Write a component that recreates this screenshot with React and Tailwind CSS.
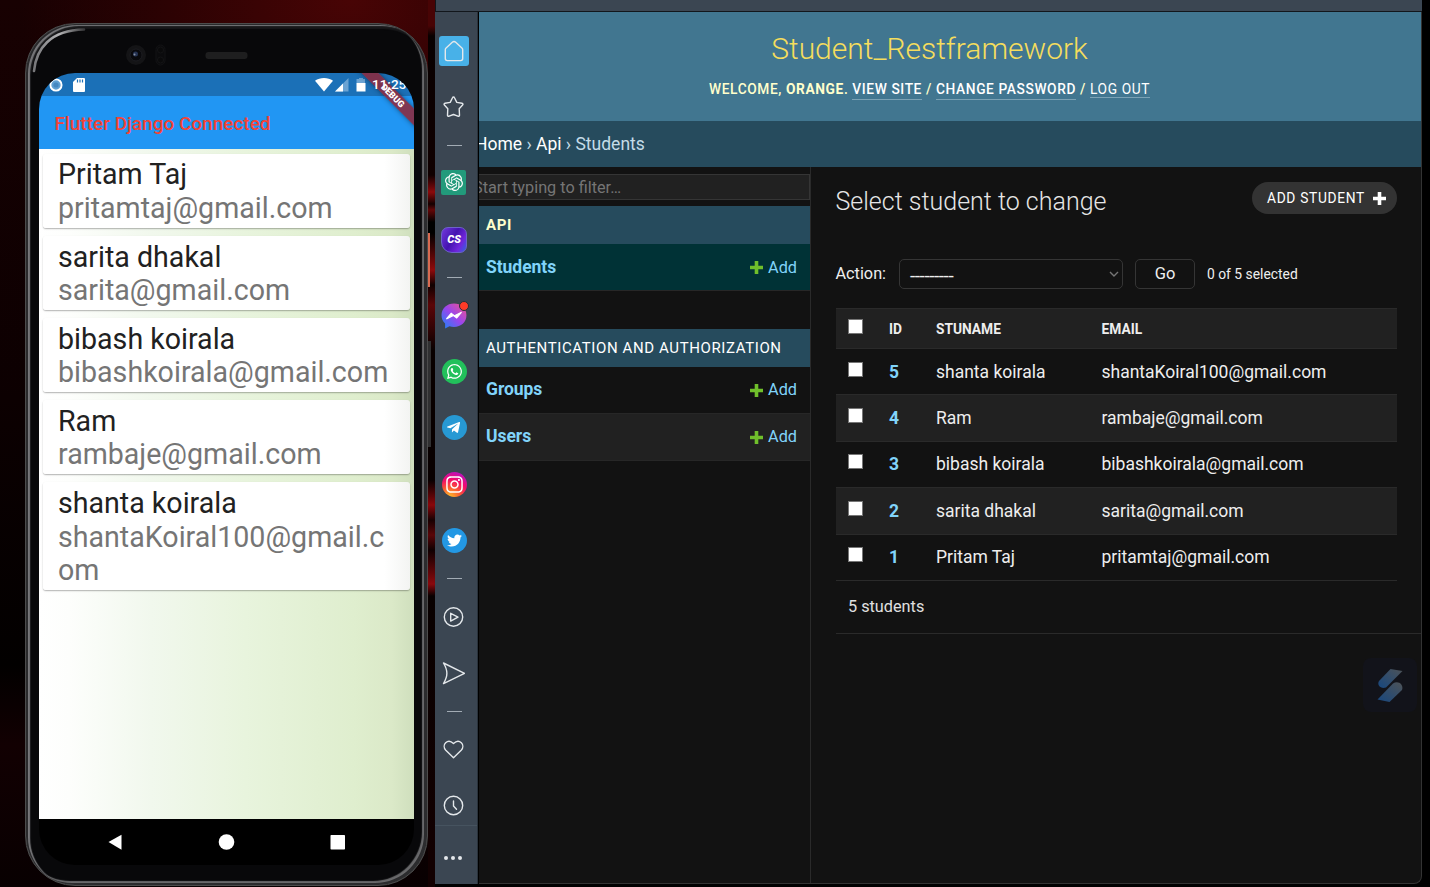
import React from "react";
import { FaWhatsapp, FaTelegramPlane, FaInstagram, FaTwitter } from "react-icons/fa";
import { SiOpenai } from "react-icons/si";

const students = [
  { id: 5, name: "shanta koirala", email: "shantaKoiral100@gmail.com" },
  { id: 4, name: "Ram", email: "rambaje@gmail.com" },
  { id: 3, name: "bibash koirala", email: "bibashkoirala@gmail.com" },
  { id: 2, name: "sarita dhakal", email: "sarita@gmail.com" },
  { id: 1, name: "Pritam Taj", email: "pritamtaj@gmail.com" },
];

function StatusBar() {
  return (
    <div className="flex h-[23px] shrink-0 items-center bg-[#1b70b7] pl-[10px] pr-[7px] text-white">
      <svg className="h-[14px] w-[14px]" viewBox="0 0 14 14">
        <circle cx="7" cy="7" r="5.6" fill="#5f9fd2" stroke="#fff" strokeWidth="1.9" />
        <circle cx="7" cy="7" r="2.6" fill="#4487c0" />
      </svg>
      <svg className="ml-[10px] h-[14px] w-[12px]" viewBox="0 0 12 14">
        <path d="M4 0h7a1 1 0 0 1 1 1v12a1 1 0 0 1-1 1H1a1 1 0 0 1-1-1V4z" fill="#fff" />
        <path d="M4.5 1.5v3M7 1.5v3M9.5 1.5v3" stroke="#1b70b7" strokeWidth="1.2" />
      </svg>
      <div className="grow" />
      <svg className="h-[14px] w-[18px]" viewBox="0 0 18 14">
        <path d="M0 2.8C5-.8 13-.8 18 2.8L9 13.6z" fill="#fff" />
      </svg>
      <svg className="ml-[2px] h-[14px] w-[14px]" viewBox="0 0 14 14">
        <path d="M0 13.5L13.5 0v13.5z" fill="#6ba3d3" />
        <path d="M0 13.5L8 5.5v8z" fill="#fff" />
      </svg>
      <svg className="ml-[7px] h-[14px] w-[10px]" viewBox="0 0 10 14">
        <path d="M3 0h4v1h2v4H0.500V1H3z" fill="#6ba3d3" />
        <path d="M.5 5H9.500v8.500H.5z" fill="#fff" />
      </svg>
      <span className="relative z-10 ml-[6px] w-[35px] whitespace-nowrap text-[13.500px] font-medium leading-none">11:25</span>
    </div>
  );
}

function PhoneCard({ student }) {
  return (
    <div className="rounded-[3px] bg-[linear-gradient(90deg,#ffffff_93%,#f3f4f2)] px-[15px] pb-[2.600px] pt-[4.800px] shadow-[0_1px_1.500px_rgba(0,0,0,0.3)]">
      <div className="text-[28.600px] leading-[33.400px] text-[#212121]">{student.name}</div>
      <div className="break-all text-[28.600px] leading-[33.400px] text-[#757575]">{student.email}</div>
    </div>
  );
}

function Phone() {
  return (
    <div className="ml-[25px] mt-[23px] flex h-[863px] w-[403px] shrink-0 flex-col rounded-[50px] border border-[#4c4c4c] bg-[#08080a] shadow-[inset_2px_1px_0_#2a2a2c,inset_4px_2px_1px_#77777a,inset_-3px_-2px_0_#2c2c2e,inset_-5px_-4px_1px_#69696b,inset_5px_5px_1px_#18181a]">
      <div className="flex h-[49px] shrink-0 items-end">
        <svg className="h-[49px] w-full" viewBox="0 -15 401 49">
          <defs>
            <linearGradient id="gloss" x1="0" y1="0" x2="1" y2="0">
              <stop offset="0" stopColor="#77777a" />
              <stop offset=".5" stopColor="#b4b4b6" />
              <stop offset="1" stopColor="#3a3a3c" />
            </linearGradient>
          </defs>
          <path d="M8 32C10 10 24 -9 58 -9.500" fill="none" stroke="url(#gloss)" strokeWidth="2.600" strokeLinecap="round" />
          <circle cx="110" cy="16" r="10" fill="#141416" />
          <circle cx="110" cy="16" r="6" fill="#09090c" stroke="#1c1c20" strokeWidth="1" />
          <circle cx="109.500" cy="15" r="2.500" fill="#263454" />
          <circle cx="108.500" cy="15.500" r="1" fill="#8790a2" />
          <rect x="130" y="6" width="9" height="20" rx="4.500" fill="#0b0b0d" stroke="#121214" />
          <circle cx="134.500" cy="11" r="3" fill="#0a0a0b" stroke="#141416" />
          <circle cx="134.500" cy="21" r="3" fill="#0a0a0b" stroke="#141416" />
          <rect x="179.500" y="13" width="42" height="7" rx="3" fill="#1e1e1f" />
        </svg>
      </div>
      <div className="relative ml-[13px] flex h-[792px] w-[375px] flex-col overflow-hidden rounded-[36px] bg-black">
        <StatusBar />
        <div className="flex h-[53px] shrink-0 items-center bg-[#2196f3] pl-[15.500px] pt-[3px] text-[19px] font-medium text-[#f44336]">
          Flutter Django Connected
        </div>
        <div className="flex h-[670px] shrink-0 flex-col gap-[8px] bg-[linear-gradient(90deg,#ffffff_0%,#fdfefc_8%,#f1f8ed_30%,#e8f4dd_55%,#dfeece_84%,#dbe9c8_94%,#cfdfbd_100%)] px-1 pt-[4.500px]">
          {[...students].reverse().map((s) => (
            <PhoneCard key={s.id} student={s} />
          ))}
        </div>
        <div className="flex h-[46px] shrink-0 items-center justify-center">
          <svg className="h-[18px] w-[240px]" viewBox="0 0 240 18">
            <path d="M1.500 9L14.500 1.700v15z" fill="#fff" />
            <circle cx="119.500" cy="9" r="7.800" fill="#fff" />
            <rect x="223.500" y="2" width="14.500" height="14.500" rx="0.800" fill="#fff" />
          </svg>
        </div>
        <div className="absolute -right-[38px] top-[16px] flex h-[12px] w-[120px] rotate-45 items-center justify-center bg-[#8a2b41]/90 pl-[2px] text-[9px] font-black leading-none text-white shadow-[0_0_5px_rgba(0,0,0,0.45)]">
          DEBUG
        </div>
      </div>
    </div>
  );
}

function Divider() {
  return <div className="ml-[12px] h-px w-[15px] shrink-0 bg-[#a2abb4]" />;
}

function Line({ children }) {
  return (
    <svg className="h-[24px] w-[24px]" viewBox="0 0 24 24" fill="none" stroke="#e4e8eb" strokeWidth="1.400" strokeLinejoin="round" strokeLinecap="round">
      {children}
    </svg>
  );
}

function Slot({ children, className }) {
  return <div className={"flex shrink-0 items-center justify-center " + className}>{children}</div>;
}

function BrowserRail() {
  return (
    <div className="flex w-[43px] shrink-0 flex-col border-r border-[#2a333c] bg-[#3b4652]">
      <Slot className="mt-[24px] h-[30px] pr-[4px]">
        <div className="flex h-[30px] w-[30px] items-center justify-center rounded-[3px] bg-[#48b1e8]">
          <Line>
            <path d="M3.300 10.800a2.400 2.400 0 0 1 .8-1.800L10.300 3.300a2.500 2.500 0 0 1 3.400 0L19.900 9a2.400 2.400 0 0 1 .8 1.800v8.800a2 2 0 0 1-2 2H5.300a2 2 0 0 1-2-2z" />
          </Line>
        </div>
      </Slot>
      <Slot className="mt-[29px] h-[24px] pr-[6px]">
        <Line>
          <path d="M11.500 2.700a1.100 1.100 0 0 1 2 0l2.300 4.700 5.200.8a1.100 1.100 0 0 1 .6 1.900l-3.400 3.600.3 6.500a1.100 1.100 0 0 1-1.600 1L12.500 19.500l-4.400 1.700a1.100 1.100 0 0 1-1.600-1l.3-6.500L3.400 10.100A1.100 1.100 0 0 1 4 8.200l5.200-.8z" />
        </Line>
      </Slot>
      <div className="h-[26px] shrink-0" />
      <Divider />
      <Slot className="mt-[23px] h-[26px] pr-[5px]">
        <div className="flex h-[25px] w-[25px] items-center justify-center rounded-[2px] bg-[#229a7b] text-white">
          <SiOpenai size={18} />
        </div>
      </Slot>
      <Slot className="mt-[31px] h-[27px] pr-[4px]">
        <div className="flex h-[26px] w-[26px] items-center justify-center rounded-[7px] rounded-bl-[11px] border border-[#6d62c8] bg-[linear-gradient(120deg,#7139dc_0%,#4413b0_45%,#7126dd_75%,#2d66e0_100%)] text-[11px] font-black italic leading-none text-white">
          CS
        </div>
      </Slot>
      <div className="h-[24px] shrink-0" />
      <Divider />
      <Slot className="relative mt-[24px] h-[28px] pr-[5px]">
        <svg width="26" height="26" viewBox="0 0 24 24">
          <defs>
            <linearGradient id="msg" x1="0" y1="1" x2="1" y2="0">
              <stop offset="0" stopColor="#1687f7" />
              <stop offset=".5" stopColor="#9a45ee" />
              <stop offset="1" stopColor="#f45585" />
            </linearGradient>
          </defs>
          <path d="M12 .5C5.500.5.500 5 .500 11.300c0 3.300 1 5.500 3.300 7.700V23.500l4-2.100c1.200.4 2.700.7 4.200.7 6.500 0 11.500-4.500 11.500-10.800S18.500.5 12 .5z" fill="url(#msg)" />
          <path d="M5 14.700l4.400-5.200 3 2.300 6.600-3.300-4.500 5.300-3-2.300z" fill="#fff" stroke="#fff" />
        </svg>
        <span className="absolute right-[8px] top-[-1px] h-[10px] w-[10px] rounded-full border border-[#26303a] bg-[#ff3b28]" />
      </Slot>
      <Slot className="mt-[28px] h-[26px] pr-[4px]">
        <div className="flex h-[25px] w-[25px] items-center justify-center rounded-full bg-[#22c05b] text-white">
          <FaWhatsapp size={17} />
        </div>
      </Slot>
      <Slot className="mt-[30px] h-[26px] pr-[4px]">
        <div className="flex h-[25px] w-[25px] items-center justify-center rounded-full bg-[#2799d4] pr-[2px] text-white">
          <FaTelegramPlane size={15} />
        </div>
      </Slot>
      <Slot className="mt-[31px] h-[26px] pr-[4px]">
        <div className="flex h-[25px] w-[25px] items-center justify-center rounded-full bg-[radial-gradient(circle_at_30%_105%,#ffc928_0%,#fb5a32_35%,#f40a6a_60%,#9c16e8_100%)] text-white">
          <FaInstagram size={19} />
        </div>
      </Slot>
      <Slot className="mt-[30px] h-[26px] pr-[4px]">
        <div className="flex h-[25px] w-[25px] items-center justify-center rounded-full bg-[#2398e4] text-white">
          <FaTwitter size={15} />
        </div>
      </Slot>
      <div className="h-[25px] shrink-0" />
      <Divider />
      <Slot className="mt-[26px] h-[24px] pr-[6px]">
        <Line>
          <circle cx="12.500" cy="12" r="9.200" />
          <path d="M9.700 8.300l7.300 3.900-7.300 3.900z" />
        </Line>
      </Slot>
      <Slot className="mt-[32px] h-[24px] pr-[6px]">
        <Line>
          <path d="M2.500 2l21 10.300-21 10.300c4.500-7.500 4.500-13 0-20.600z" />
        </Line>
      </Slot>
      <div className="h-[26px] shrink-0" />
      <Divider />
      <Slot className="mt-[25px] h-[24px] pr-[6px]">
        <Line>
          <path d="M12.500 20.700L4.800 13.200c-4.700-5 1.800-12.400 7.700-6.600 5.900-5.800 12.400 1.600 7.700 6.600z" />
        </Line>
      </Slot>
      <Slot className="mt-[32px] h-[24px] pr-[6px]">
        <Line>
          <circle cx="12.500" cy="12.500" r="9.200" />
          <path d="M12.500 8v5l3 3.300" />
        </Line>
      </Slot>
      <div className="mt-[8px] h-px shrink-0 bg-[#46535f]" />
      <Slot className="mt-[20px] h-[24px] pr-[6px]">
        <svg className="h-[6px] w-[20px]" viewBox="0 0 20 6" fill="#e4e8eb">
          <circle cx="3" cy="3" r="2" />
          <circle cx="10" cy="3" r="2" />
          <circle cx="17" cy="3" r="2" />
        </svg>
      </Slot>
    </div>
  );
}

function Plus({ className }) {
  return (
    <svg className={"h-[13px] w-[13px] shrink-0 " + className} viewBox="0 0 13 13" fill="currentColor">
      <path d="M4.700 0h3.600v4.700H13v3.600H8.300V13H4.700V8.300H0V4.700h4.700z" />
    </svg>
  );
}

function ModelRow({ name, className, nameClass = "", addClass = "" }) {
  return (
    <div className={"flex h-[47px] items-center border-b border-[#272727] pl-[7px] pr-[13px] " + className}>
      <span className={"text-[17.500px] font-bold tracking-[-0.050px] text-[#81d4fa] " + nameClass}>{name}</span>
      <Plus className="ml-auto text-[#70bf2b]" />
      <span className={"ml-[5px] text-[16.250px] text-[#81d4fa] " + addClass}>Add</span>
    </div>
  );
}

function Sidebar() {
  return (
    <div className="flex w-[332px] shrink-0 flex-col overflow-hidden border-r border-[#2a2a2a] pt-[7px]">
      <div className="-ml-[10px] flex h-[26px] shrink-0 items-center border border-[#353535] bg-[#212121] pl-[3px] pt-[2px] text-[16.250px] text-[#757575]">
        Start typing to filter…
      </div>
      <div className="mt-[6px] flex h-[38px] items-center bg-[#264b5d] pl-[7px] text-[15px] font-bold tracking-[0.600px] text-[#ffffcc]">API</div>
      <ModelRow name="Students" className="bg-[#003236]" addClass="pt-[2px]" />
      <div className="mt-[38px] flex h-[38px] items-center bg-[#264b5d] pl-[7px] text-[15px] tracking-[0.610px] text-white">
        AUTHENTICATION AND AUTHORIZATION
      </div>
      <ModelRow name="Groups" nameClass="pb-[2px]" />
      <ModelRow name="Users" className="bg-[#212121]" nameClass="pb-[2px]" />
    </div>
  );
}

function Box() {
  return <span className="mb-[5px] block h-[15px] w-[15px] border border-[#767676] bg-white" />;
}

function Changelist() {
  const cols = "grid grid-cols-[41px_47px_165.5px_1fr] items-center border-b border-[#2a2a2a] pl-[12px] ";
  return (
    <div className="flex grow flex-col pl-[25px] text-[#eeeeee]">
      <div className="flex h-[62px] items-start justify-between pr-[24px] pt-[15px]">
        <h2 className="-ml-[0.500px] pt-[2px] text-[25px] font-light leading-[35px] text-[#e6e6e6]">Select student to change</h2>
        <div className="flex h-[32px] w-[145px] items-center rounded-full bg-[#333333] pl-[15px] text-[13.750px] tracking-[0.680px] text-white">
          ADD STUDENT
          <Plus className="ml-auto mr-[11px]" />
        </div>
      </div>
      <div className="mt-[30px] flex h-[30px] items-center">
        <span className="-ml-[0.500px] w-[63.500px] text-[16.250px]">Action:</span>
        <div className="flex h-[30px] w-[224px] items-center rounded-[5px] border border-[#353535] pl-[10px] pr-[3px]">
          <span className="pt-[2px] text-[19px] leading-none tracking-[-0.450px]">---------</span>
          <svg className="ml-auto h-[10px] w-[10px]" viewBox="0 0 10 10" fill="none" stroke="#757575" strokeWidth="1.400">
            <path d="M1 3l4 4 4-4" />
          </svg>
        </div>
        <div className="ml-[12px] flex h-[30px] w-[60px] items-center justify-center rounded-[5px] border border-[#353535] text-[16.500px]">Go</div>
        <span className="ml-[12px] text-[13.850px]">0 of 5 selected</span>
      </div>
      <div className="mr-[24px] mt-[19px]">
        <div className={cols + "h-[41px] border-t bg-[#212121] text-[13.750px] font-bold"}>
          <Box />
          <span className="pt-[2px]">ID</span>
          <span className="pt-[2px]">STUNAME</span>
          <span className="pt-[2px]">EMAIL</span>
        </div>
        {students.map((s) => (
          <div key={s.id} className={cols + "h-[46.400px] text-[17.500px] even:bg-transparent odd:bg-[#212121]"}>
            <Box />
            <span className="font-bold text-[#81d4fa]">{s.id}</span>
            <span>{s.name}</span>
            <span>{s.email}</span>
          </div>
        ))}
      </div>
      <div className="flex h-[53px] items-center border-b border-[#2a2a2a] pl-[12px] text-[16.250px] text-[#e0e0e0]">5 students</div>
      <div className="mt-[24px] flex justify-end pr-[4px]">
        <div className="flex h-[54px] w-[54px] items-center justify-center rounded-[8px] bg-[#12131a] pt-[2px]">
          <svg className="h-[40px] w-[36px]" viewBox="0 0 36 40">
            <defs>
              <linearGradient id="sa" x1="0" y1="1" x2="1" y2="0">
                <stop offset="0" stopColor="#17477f" />
                <stop offset="1" stopColor="#4e5357" />
              </linearGradient>
            </defs>
            <path d="M18.500 3L30.500 5 14 21.500C9 23.500 4.500 19 7 15z" fill="url(#sa)" />
            <path d="M5.500 33.500L21 17.500c5-3.500 11 1 9 6.500L17.500 36z" fill="url(#sa)" />
          </svg>
        </div>
      </div>
    </div>
  );
}

function Admin() {
  const link = "border-b border-[#7ba2b5] text-white ";
  return (
    <div className="flex w-[943px] shrink-0 flex-col overflow-hidden rounded-br-[8px] border-b border-r border-[#333333] bg-[#121212]">
      <div className="flex h-[109px] shrink-0 flex-col items-center bg-[#417690] pr-[41px] pt-[17px]">
        <h1 className="text-[30px] font-light leading-[39px] text-[#f5dd5d]">Student_Restframework</h1>
        <div className="mt-[12px] whitespace-pre text-[13.750px] font-medium leading-[18px] tracking-[0.600px] text-[#ffffcc]">
          WELCOME, <b className="font-bold">ORANGE</b>. <span className={link + "pb-[2px]"}>VIEW SITE</span> /{" "}
          <span className={link + "pb-[2px]"}>CHANGE PASSWORD</span> / <span className={link + "font-normal"}>LOG OUT</span>
        </div>
      </div>
      <div className="flex h-[46px] shrink-0 items-center bg-[#264b5d] text-[17.500px] text-[#c4dce8]">
        <div className="-ml-[4px] whitespace-pre">
          <span className="text-white">Home</span> › <span className="text-white">Api</span> › Students
        </div>
      </div>
      <div className="flex grow">
        <Sidebar />
        <Changelist />
      </div>
    </div>
  );
}

export default function App() {
  return (
    <div className="flex h-[887px] w-[1430px] overflow-hidden bg-black font-[Roboto,sans-serif]">
      <div className="flex w-[435px] shrink-0 bg-[radial-gradient(ellipse_330px_240px_at_350px_0px,#480405_0%,#2c0203_55%,transparent_100%),linear-gradient(180deg,#180102_0%,#0c0001_45%,#020000_75%,#120002_84%,#080001_100%)]">
        <Phone />
        <div className="flex w-[7px] shrink-0 flex-col bg-[linear-gradient(180deg,#480405_0px,#480405_26px,#080000_36px,#100000_175px,#8c0a0c_192px,#140000_204px,#640708_210px,#000_222px,#000_233px,#8f0a0c_270px,#100000_285px,#5b0608_305px,#300304_330px,#080000_350px,#080000_480px,#8a070b_505px,#180001_520px,#5a0609_535px,#100001_550px,#8a090d_584px,#080000_596px,#120001_860px)]">
          <div className="mt-[233px] h-[54px] w-[2px] bg-[#d86b51]" />
          <div className="mt-[54px] h-[106px] w-[3px] bg-[#303031]" />
        </div>
      </div>
      <div className="flex w-[987px] shrink-0 flex-col pb-[3px]">
        <div className="h-[12px] shrink-0 border-b border-l border-[#12161b] bg-[#3b4652]" />
        <div className="flex h-[872px]">
          <BrowserRail />
          <div className="w-px shrink-0 bg-black" />
          <Admin />
        </div>
      </div>
    </div>
  );
}
